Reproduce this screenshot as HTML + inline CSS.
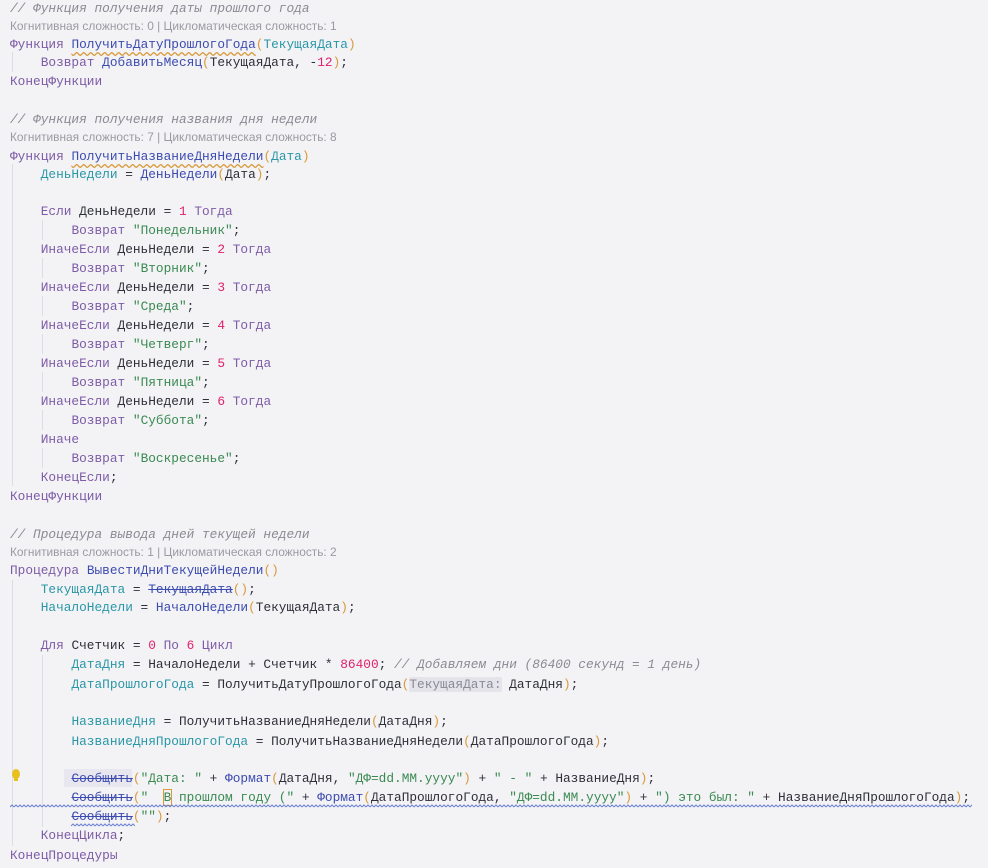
<!DOCTYPE html><html><head><meta charset="utf-8"><style>
body{margin:0;background:#f3f3f6;width:988px;height:868px;overflow:hidden;position:relative}
.l{position:absolute;left:10px;height:19px;line-height:19px;white-space:pre;font-family:"Liberation Mono",monospace;font-size:12.8px;color:#2f2f3a}
.h{font-family:"Liberation Sans",sans-serif;font-size:11.9px;color:#9a9aa2}
.k{color:#7d5ba6}.f{color:#3c4bb0}.v{color:#2a97a6}.s{color:#3a8a52}.n{color:#e0206a}.p{color:#d89a3a}
.c{color:#8a8a92;font-style:italic}
.st{text-decoration:line-through}
.w{text-decoration:underline wavy #d89a3a;text-underline-offset:3px}
.hint{background:#e4e4ea;color:#8a8a95;border-radius:2px}
.g{position:absolute;width:1px;background:#dcdce2}
</style></head><body>
<div class="g" style="left:12px;top:52px;height:20px"></div>
<div class="g" style="left:12px;top:164px;height:322px"></div>
<div class="g" style="left:42px;top:220px;height:20px"></div>
<div class="g" style="left:42px;top:258px;height:20px"></div>
<div class="g" style="left:42px;top:296px;height:20px"></div>
<div class="g" style="left:42px;top:334px;height:20px"></div>
<div class="g" style="left:42px;top:372px;height:20px"></div>
<div class="g" style="left:42px;top:410px;height:20px"></div>
<div class="g" style="left:42px;top:448px;height:20px"></div>
<div class="g" style="left:12px;top:580px;height:266px"></div>
<div class="g" style="left:42px;top:655px;height:172px"></div>
<div class="l" style="top:-1px"><span class="c">// Функция получения даты прошлого года</span></div>
<div class="l h" style="top:17px">Когнитивная сложность: 0 | Цикломатическая сложность: 1</div>
<div class="l" style="top:35px"><span class="k">Функция</span> <span class="f w">ПолучитьДатуПрошлогоГода</span><span class="p">(</span><span class="v">ТекущаяДата</span><span class="p">)</span></div>
<div class="l" style="top:53px">    <span class="k">Возврат</span> <span class="f">ДобавитьМесяц</span><span class="p">(</span>ТекущаяДата, -<span class="n">12</span><span class="p">)</span>;</div>
<div class="l" style="top:72px"><span class="k">КонецФункции</span></div>
<div class="l" style="top:110px"><span class="c">// Функция получения названия дня недели</span></div>
<div class="l h" style="top:128px">Когнитивная сложность: 7 | Цикломатическая сложность: 8</div>
<div class="l" style="top:147px"><span class="k">Функция</span> <span class="f w">ПолучитьНазваниеДняНедели</span><span class="p">(</span><span class="v">Дата</span><span class="p">)</span></div>
<div class="l" style="top:165px">    <span class="v">ДеньНедели</span> = <span class="f">ДеньНедели</span><span class="p">(</span>Дата<span class="p">)</span>;</div>
<div class="l" style="top:202px">    <span class="k">Если</span> ДеньНедели = <span class="n">1</span> <span class="k">Тогда</span></div>
<div class="l" style="top:221px">        <span class="k">Возврат</span> <span class="s">"Понедельник"</span>;</div>
<div class="l" style="top:240px">    <span class="k">ИначеЕсли</span> ДеньНедели = <span class="n">2</span> <span class="k">Тогда</span></div>
<div class="l" style="top:259px">        <span class="k">Возврат</span> <span class="s">"Вторник"</span>;</div>
<div class="l" style="top:278px">    <span class="k">ИначеЕсли</span> ДеньНедели = <span class="n">3</span> <span class="k">Тогда</span></div>
<div class="l" style="top:297px">        <span class="k">Возврат</span> <span class="s">"Среда"</span>;</div>
<div class="l" style="top:316px">    <span class="k">ИначеЕсли</span> ДеньНедели = <span class="n">4</span> <span class="k">Тогда</span></div>
<div class="l" style="top:335px">        <span class="k">Возврат</span> <span class="s">"Четверг"</span>;</div>
<div class="l" style="top:354px">    <span class="k">ИначеЕсли</span> ДеньНедели = <span class="n">5</span> <span class="k">Тогда</span></div>
<div class="l" style="top:373px">        <span class="k">Возврат</span> <span class="s">"Пятница"</span>;</div>
<div class="l" style="top:392px">    <span class="k">ИначеЕсли</span> ДеньНедели = <span class="n">6</span> <span class="k">Тогда</span></div>
<div class="l" style="top:411px">        <span class="k">Возврат</span> <span class="s">"Суббота"</span>;</div>
<div class="l" style="top:430px">    <span class="k">Иначе</span></div>
<div class="l" style="top:449px">        <span class="k">Возврат</span> <span class="s">"Воскресенье"</span>;</div>
<div class="l" style="top:468px">    <span class="k">КонецЕсли</span>;</div>
<div class="l" style="top:487px"><span class="k">КонецФункции</span></div>
<div class="l" style="top:525px"><span class="c">// Процедура вывода дней текущей недели</span></div>
<div class="l h" style="top:543px">Когнитивная сложность: 1 | Цикломатическая сложность: 2</div>
<div class="l" style="top:561px"><span class="k">Процедура</span> <span class="f">ВывестиДниТекущейНедели</span><span class="p">()</span></div>
<div class="l" style="top:580px">    <span class="v">ТекущаяДата</span> = <span class="f st">ТекущаяДата</span><span class="p">()</span>;</div>
<div class="l" style="top:598px">    <span class="v">НачалоНедели</span> = <span class="f">НачалоНедели</span><span class="p">(</span>ТекущаяДата<span class="p">)</span>;</div>
<div class="l" style="top:636px">    <span class="k">Для</span> Счетчик = <span class="n">0</span> <span class="k">По</span> <span class="n">6</span> <span class="k">Цикл</span></div>
<div class="l" style="top:655px">        <span class="v">ДатаДня</span> = НачалоНедели + Счетчик * <span class="n">86400</span>; <span class="c">// Добавляем дни (86400 секунд = 1 день)</span></div>
<div class="l" style="top:675px">        <span class="v">ДатаПрошлогоГода</span> = ПолучитьДатуПрошлогоГода<span class="p">(</span><span class="hint">ТекущаяДата:</span> ДатаДня<span class="p">)</span>;</div>
<div class="l" style="top:712px">        <span class="v">НазваниеДня</span> = ПолучитьНазваниеДняНедели<span class="p">(</span>ДатаДня<span class="p">)</span>;</div>
<div class="l" style="top:732px">        <span class="v">НазваниеДняПрошлогоГода</span> = ПолучитьНазваниеДняНедели<span class="p">(</span>ДатаПрошлогоГода<span class="p">)</span>;</div>
<div style="position:absolute;left:12px;top:769px;width:8px;height:10px;border-radius:50%;background:#e8c020"></div>
<div style="position:absolute;left:14px;top:778px;width:4px;height:3px;background:#e8c020"></div>
<div style="position:absolute;left:64px;top:769px;width:68px;height:18px;background:#e8e6ee"></div>
<div class="l" style="top:769px">        <span class="f st">Сообщить</span><span class="p">(</span><span class="s">"Дата: "</span> + <span class="f">Формат</span><span class="p">(</span>ДатаДня, <span class="s">"ДФ=dd.MM.yyyy"</span><span class="p">)</span> + <span class="s">" - "</span> + НазваниеДня<span class="p">)</span>;</div>
<div class="l" style="top:788px">        <span class="f st">Сообщить</span><span class="p">(</span><span class="s">"  <span style="outline:1px solid #d89a3a">В</span> прошлом году ("</span> + <span class="f">Формат</span><span class="p">(</span>ДатаПрошлогоГода, <span class="s">"ДФ=dd.MM.yyyy"</span><span class="p">)</span> + <span class="s">") это был: "</span> + НазваниеДняПрошлогоГода<span class="p">)</span>;</div>
<svg style="position:absolute;left:10px;top:803px" width="962" height="6"><defs><pattern id="wv" width="4" height="6" patternUnits="userSpaceOnUse"><path d="M0 4 L2 2 L4 4" fill="none" stroke="#6a80d0" stroke-width="1"/></pattern></defs><rect width="962" height="6" fill="url(#wv)"/></svg>
<svg style="position:absolute;left:71px;top:822px" width="64" height="6"><rect width="64" height="6" fill="url(#wv)"/></svg>
<div class="l" style="top:807px">        <span class="f st">Сообщить</span><span class="p">(</span><span class="s">""</span><span class="p">)</span>;</div>
<div class="l" style="top:826px">    <span class="k">КонецЦикла</span>;</div>
<div class="l" style="top:846px"><span class="k">КонецПроцедуры</span></div>
</body></html>
